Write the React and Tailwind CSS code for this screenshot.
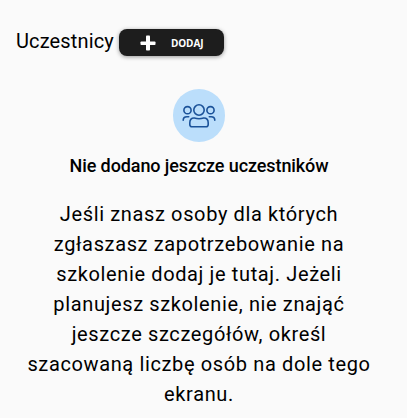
import React from 'react';

const PlusIcon = () => (
    <svg className="w-4 h-4" viewBox="0 0 16 16" fill="currentColor">
        <rect x="6" y="0.5" width="4" height="15" rx="0.8" />
        <rect x="0.5" y="6.500" width="15" height="3.500" rx="0.8" />
    </svg>
);

const PeopleIcon = () => (
    <svg className="w-[34px] h-6" viewBox="0 0 34 24" fill="none" stroke="#1b5299" strokeWidth="1.6" strokeLinecap="round" strokeLinejoin="round">
        <circle cx="17" cy="6" r="5.200" />
        <circle cx="5.500" cy="6.200" r="3.600" />
        <circle cx="28.500" cy="6.200" r="3.600" />
        <path d="M12.300 14c3 .9 6.400 .9 9.400 0 2.800-.2 4.500 1.700 4.500 4.700v1.700c0 1.500-.9 2.300-2.300 2.300H10.100c-1.400 0-2.300-.8-2.300-2.300v-1.700c0-3 1.700-4.900 4.500-4.700z" />
        <path d="M1.200 16.300c0-2.300 1.400-3.600 3.700-3.600h1.800M32.800 16.300c0-2.300-1.400-3.600-3.700-3.600h-1.800" />
    </svg>
);

const App = () => {
    return (
        <div className="h-[418px] overflow-hidden bg-[#fafafa] font-['Roboto',sans-serif] text-black">
            <div className="flex items-center gap-[5px] pl-4 pt-[26px]">
                <h2 className="text-[20px] leading-[30px] tracking-[0.14px]">Uczestnicy</h2>
                <button type="button" className="mt-[3px] flex h-[27px] w-[105px] items-center rounded-lg bg-[#1d1d1d] pl-[21px] text-white shadow-[0_1px_4px_rgba(0,0,0,0.4)]">
                    <PlusIcon />
                    <span className="ml-[15px] font-['Open_Sans',sans-serif] text-[10px] font-bold leading-none tracking-[-0.1px]">DODAJ</span>
                </button>
            </div>

            {/* Empty state */}
            <div className="mr-[9px] mt-[33px] flex flex-col items-center text-center">
                <div className="flex h-[53px] w-[52px] items-center justify-center rounded-full bg-[#bbdefb]">
                    <PeopleIcon />
                </div>
                <h3 className="mt-[10px] text-[18px] font-medium leading-7 tracking-[-0.1px]">Nie dodano jeszcze uczestników</h3>
                <p className="mt-[19px] w-[350px] text-[20px] leading-[30px] tracking-[0.63px]">
                    Jeśli znasz osoby dla których zgłaszasz zapotrzebowanie na szkolenie dodaj je tutaj. Jeżeli planujesz szkolenie, nie znająć jeszcze szczegółów, określ szacowaną liczbę osób na dole tego ekranu.
                </p>
            </div>
        </div>
    );
};

export default App;
